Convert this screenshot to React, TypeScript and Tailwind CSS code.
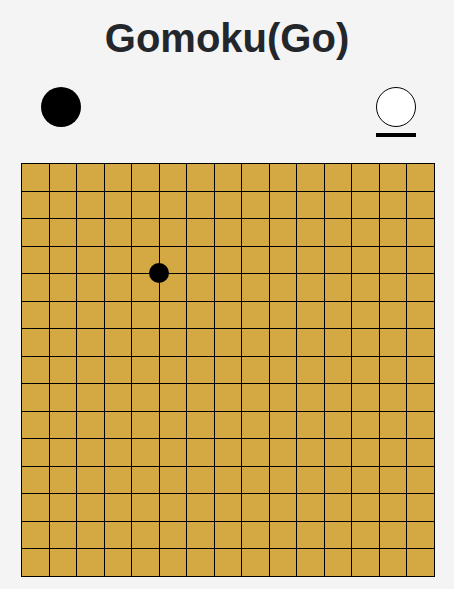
import * as React from "react";

const SIZE = 15;

export default function App() {
  const cells = Array.from({ length: SIZE * SIZE });

  return (
    <div className="min-h-screen bg-[#f4f4f4] pt-[15px] font-['Liberation_Sans',Arial,sans-serif]">
      <h1 className="text-center text-[40px] leading-[46px] font-bold text-[#23272b]">Gomoku(Go)</h1>

      <div className="ml-[21px] w-[414px]">
        {/* players */}
        <div className="mt-[26px] flex items-start justify-between pl-5 pr-[19px]">
          <div className="h-10 w-10 rounded-full bg-black" />
          <div className="flex flex-col items-center">
            <div className="h-10 w-10 rounded-full border border-black bg-white" />
            <div className="mt-[6px] h-[4px] w-10 bg-black" />
          </div>
        </div>

        {/* board */}
        <div className="relative mt-[26px] h-[414px] w-[414px]">
          <div className="grid h-full w-full grid-cols-[repeat(15,minmax(0,1fr))] grid-rows-[repeat(15,minmax(0,1fr))] border-l border-t border-black bg-[#d4a843]">
            {cells.map((_, i) => (
              <div key={i} className="border-b border-r border-black" />
            ))}
          </div>
          <div className="absolute left-[138px] top-[110px] h-5 w-5 -translate-x-1/2 -translate-y-1/2 rounded-full bg-black" />
        </div>
      </div>
    </div>
  );
}
